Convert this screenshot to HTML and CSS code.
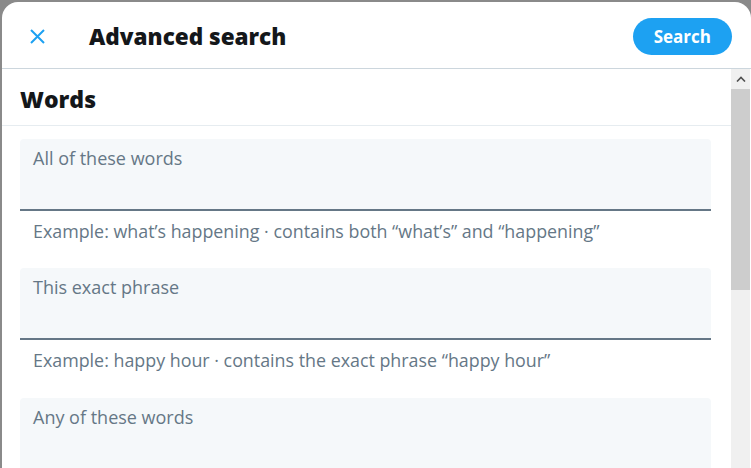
FILE: index.html
```html
<!DOCTYPE html>
<html>
<head>
<meta charset="utf-8">
<link rel="stylesheet" href="styles.css">
</head>
<body>
<div class="modal">
  <header class="header">
    <button class="close" aria-label="Close">
      <svg viewBox="0 0 15 15" width="15" height="15"><path d="M1 1 L14 14 M14 1 L1 14" stroke="#1da1f2" stroke-width="2" fill="none"/></svg>
    </button>
    <h1 class="title">Advanced search</h1>
    <button class="search-btn">Search</button>
  </header>
  <div class="body">
    <div class="content">
      <h2 class="section-title">Words</h2>
      <div class="fields">
        <div class="field"><span class="label">All of these words</span></div>
        <p class="hint">Example: what’s happening · contains both “what’s” and “happening”</p>
        <div class="field"><span class="label">This exact phrase</span></div>
        <p class="hint">Example: happy hour · contains the exact phrase “happy hour”</p>
        <div class="field"><span class="label">Any of these words</span></div>
      </div>
    </div>
    <div class="scrollbar">
      <div class="sb-btn"><svg viewBox="0 0 10 6" width="10" height="6"><path d="M1 5.5 L5 1.5 L9 5.5" stroke="#505050" stroke-width="1.6" fill="none"/></svg></div>
      <div class="sb-thumb"></div>
    </div>
  </div>
</div>
</body>
</html>
```
FILE: styles.css
```css
html, body {
  margin: 0;
  padding: 0;
  height: 100%;
  overflow: hidden;
}
body {
  background: #8a8a8a;
  font-family: "Open Sans", "Noto Sans", sans-serif;
}
.modal {
  margin: 2px 0 0 2px;
  width: 749px;
  height: calc(100% - 2px);
  background: #fff;
  border-radius: 16px 16px 0 0;
  display: flex;
  flex-direction: column;
  overflow: hidden;
}
.header {
  flex: none;
  height: 66px;
  border-bottom: 1px solid #ccd6dd;
  display: flex;
  align-items: center;
  padding: 0 19px 0 24px;
  box-sizing: content-box;
}
.close {
  width: 23px;
  height: 23px;
  padding: 0;
  border: 0;
  background: none;
  display: flex;
  align-items: center;
  justify-content: center;
  margin-top: 3px;
}
.close svg { display: block; }
.title {
  margin: 3px 0 0 40px;
  font-size: 22.5px;
  font-weight: 800;
  color: #14171a;
  flex: 1;
}
.search-btn {
  height: 37px;
  padding: 0 21px;
  border: 0;
  border-radius: 19px;
  background: #1da1f2;
  color: #fff;
  font-family: inherit;
  font-size: 17px;
  font-weight: 700;
  margin-top: 2px;
}
.body {
  flex: 1;
  display: flex;
  min-height: 0;
}
.content {
  flex: 1;
}
.section-title {
  margin: 0;
  border-bottom: 1px solid #e6ecf0;
  display: flex;
  align-items: center;
  padding: 4px 0 0 18px;
  box-sizing: border-box;
  height: 57px;
  font-size: 23px;
  font-weight: 800;
  color: #14171a;
}
.fields {
  padding: 13px 20px 0 18px;
}
.field {
  background: #f5f8fa;
  border-bottom: 2px solid #657786;
  border-radius: 4px 4px 0 0;
  padding: 7px 13px 0;
  box-sizing: content-box;
  height: 63px;
}
.label {
  font-size: 18px;
  color: #657786;
}
.hint {
  margin: 0;
  padding: 7px 13px 0;
  height: 50px;
  font-size: 17.85px;
  line-height: 26px;
  color: #657786;
}
.hint + .field + .hint {
  height: 51px;
}
.scrollbar {
  flex: none;
  width: 19px;
  margin-right: 1px;
  background: #f0f0f0;
  display: flex;
  flex-direction: column;
}
.sb-btn {
  height: 20px;
  display: flex;
  align-items: center;
  justify-content: center;
}
.sb-btn svg { display: block; }
.sb-thumb {
  height: 201px;
  background: #cdcdcd;
}
```
